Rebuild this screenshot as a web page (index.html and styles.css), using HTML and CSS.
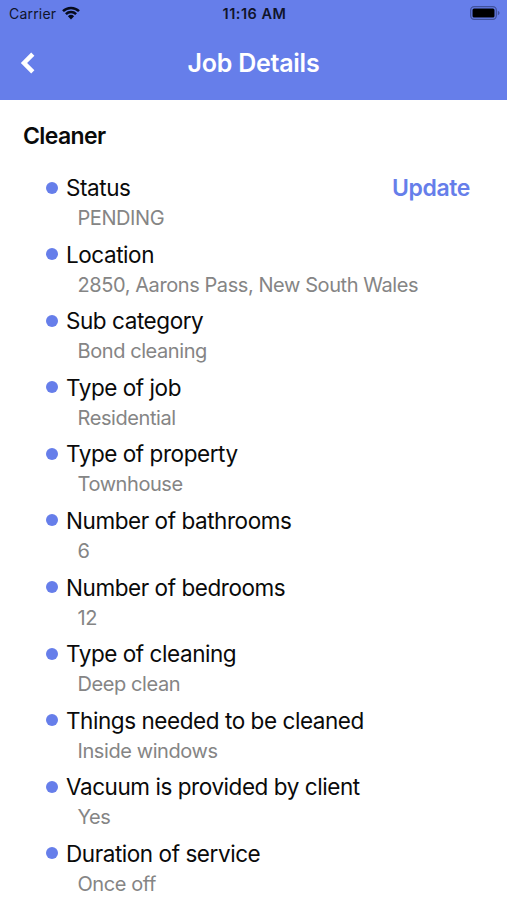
FILE: index.html
```html
<!DOCTYPE html>
<html lang="en">
<head>
<meta charset="utf-8">
<title>Job Details</title>
<link rel="stylesheet" href="styles.css">
</head>
<body>
<header class="header">
<div class="status">
<div class="carrier"><span class="carrier-name">Carrier</span><svg class="wifi" viewBox="0 0 18 14"><path d="M1 5.200a11.300 11.300 0 0 1 16 0M3.900 8.200a7.200 7.200 0 0 1 10.200 0" fill="none" stroke="#070b1c" stroke-width="2.500"/><path d="M5.900 10.300a4.500 4.500 0 0 1 6.200 0L9 13.500z" fill="#070b1c"/></svg></div>
<span class="time">11:16 AM</span>
<svg class="battery" viewBox="0 0 30 14"><rect x=".7" y=".7" width="25.600" height="12.600" rx="3.500" fill="none" stroke="#40519c" stroke-width="1.300"/><rect x="2.500" y="2.500" width="22" height="9" rx="1.500" fill="#000"/><path d="M27.800 4.800c2.300.8 2.300 3.600 0 4.400z" fill="#40519c"/></svg>
</div>
<nav class="nav">
<svg class="back" viewBox="0 0 16 22"><path d="M12.800 2.200 4 11l8.800 8.800" fill="none" stroke="#fff" stroke-width="4.500"/></svg>
<h1 class="title">Job Details</h1>
</nav>
</header>
<main class="content">
<h2 class="heading">Cleaner</h2>
<ul class="list">
<li class="item"><div class="row"><span class="label">Status</span><a class="update">Update</a></div><p class="value">PENDING</p></li>
<li class="item"><div class="row"><span class="label">Location</span></div><p class="value">2850, Aarons Pass, New South Wales</p></li>
<li class="item"><div class="row"><span class="label">Sub category</span></div><p class="value">Bond cleaning</p></li>
<li class="item"><div class="row"><span class="label">Type of job</span></div><p class="value">Residential</p></li>
<li class="item"><div class="row"><span class="label">Type of property</span></div><p class="value">Townhouse</p></li>
<li class="item"><div class="row"><span class="label">Number of bathrooms</span></div><p class="value">6</p></li>
<li class="item"><div class="row"><span class="label">Number of bedrooms</span></div><p class="value">12</p></li>
<li class="item"><div class="row"><span class="label">Type of cleaning</span></div><p class="value">Deep clean</p></li>
<li class="item"><div class="row"><span class="label">Things needed to be cleaned</span></div><p class="value">Inside windows</p></li>
<li class="item"><div class="row"><span class="label">Vacuum is provided by client</span></div><p class="value">Yes</p></li>
<li class="item"><div class="row"><span class="label">Duration of service</span></div><p class="value">Once off</p></li>
</ul>
</main>
</body>
</html>
```
FILE: styles.css
```css
* { box-sizing: border-box; margin: 0; padding: 0; }
body { height: 900px; overflow: hidden; background: #fff; color: #0a0a0a; font-family: Inter, sans-serif; }
.header { height: 99.5px; background: #667eea; }
.status { display: grid; grid-template-columns: 1fr auto 1fr; align-items: center; height: 27px; padding: 0 7px 0 9px; color: #10142a; font-size: 14px; line-height: 27px; }
.carrier { display: flex; align-items: center; gap: 6px; }
.carrier-name { letter-spacing: .2px; }
.wifi { width: 18px; height: 14px; margin-bottom: 1px; }
.time { font-weight: 600; font-size: 14.5px; letter-spacing: .5px; }
.battery { width: 30px; height: 14px; margin-bottom: 1px; justify-self: end; }
.nav { display: grid; grid-template-columns: 60px 1fr 60px; align-items: center; height: 72.5px; }
.back { width: 16px; height: 22px; margin: 0 0 2px 20px; }
.title { color: #fff; font-size: 25px; line-height: 73px; font-weight: 600; text-align: center; letter-spacing: -.25px; }
.content { padding: 20.5px 37px 0 23px; }
.heading { font-size: 23px; line-height: 32px; font-weight: 600; letter-spacing: -.6px; }
.list { list-style: none; padding: 20px 0 0 22.5px; }
.item { height: 66.6px; }
.row { display: flex; align-items: center; height: 32px; }
.row::before { content: ""; width: 12px; height: 12px; margin-right: 8.5px; margin-bottom: 1px; border-radius: 50%; background: #667eea; }
.label { font-size: 22.5px; line-height: 32px; letter-spacing: -.44px; }
.update { margin-left: auto; color: #667eea; font-size: 23px; font-weight: 600; letter-spacing: -.4px; }
.value { padding-left: 32px; color: #858585; font-size: 20px; line-height: 28px; letter-spacing: -.42px; }
```
